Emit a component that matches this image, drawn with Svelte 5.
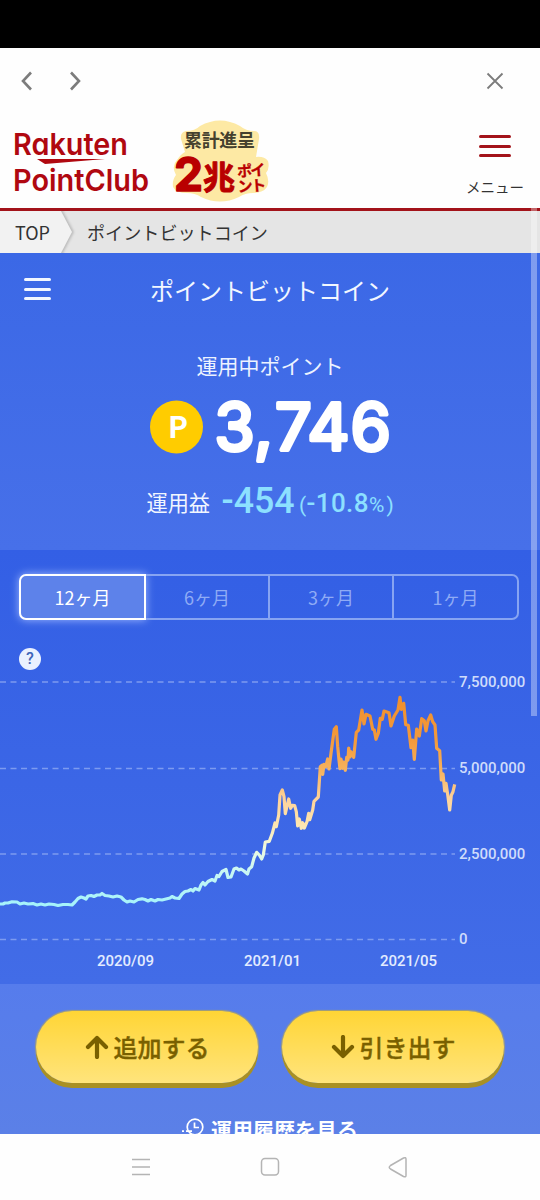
<script lang="ts">
	const periods = ['12ヶ月', '6ヶ月', '3ヶ月', '1ヶ月'];
	let active = $state(0);

	const gridLines = [
		{ y: 682, label: '7,500,000' },
		{ y: 768.5, label: '5,000,000' },
		{ y: 854, label: '2,500,000' },
		{ y: 939.5, label: '0' }
	];

	const months = [
		{ x: 125.5, label: '2020/09' },
		{ x: 272.5, label: '2021/01' },
		{ x: 408.5, label: '2021/05' }
	];

	const price = [
		'0,904 3,904 5,903 8,903 12,901.8 17,902 20,904 24,903 28,904 33,903.6 37,905 41,904 45,905',
		'49,904 54,904.5 58,905.5 63,904.5 68,904.5 72,905 75,902 78,898.5 81,897 84,898 86,899 88,896',
		'91,895.5 94,896.5 97,895 100,895 102,893.5 105,895.5 109,896 113,897 117,896 121,897 124,900',
		'127,902 130,901 134,902 138,899.5 142,898.8 145,899.5 148,901 151,899.5 155,901 158,899.5',
		'162,900 166,899 170,898 172,896.5 175,898 179,898.5 182,894 185,891.5 188,891 191,889.5',
		'193,891 195,888.5 199,890 201,885 203,882.5 205,885 208,881.5 212,879.5 215,881 217,875.5',
		'219,876.5 222,871.5 226,869.5 228,877.5 231,877 234,869 236.5,868 239,870 241,869 244,871 247.5,874',
		'249,869 251.7,866.7 254,858 256.7,852.3 259.3,855 261.7,859 263.3,855 265.3,842 269.3,841.3 272.3,833.3',
		'275,823 276.3,826.7 278.7,815 280,795 282.3,790 284,796.7 285.3,813.7 288.7,799 290.7,808.3',
		'292.3,805.3 294.7,805.7 296.3,811.7 297.7,826 299.3,819 301.3,828.3 302.7,822.7 304.3,828 307,821.7',
		'308.7,813.3 309.7,819.7 312.7,810 314,801.3 318.3,797 320.3,766.7 322,765.3 322.7,774.3 324,764.3',
		'325.7,766.7 327.7,759 329,769 331,753.3 334.3,729.3 336.3,726.7 337.7,746.7 339,760 340,768.7',
		'341,759 342.7,768.3 343.7,762 345.3,770.3 346.7,757.3 348,760 348.7,748 350,757 351,751.7 353.7,757.3',
		'356.3,732.3 358.7,730 362,710 364,724 366,714.3 370,716 372.7,729.3 374.3,730 376,739.3',
		'378.3,733.3 380.3,718.3 382.3,719.3 384,711 389,712.7 391,726 394.3,716 398,710 400,697.3',
		'401.3,709.3 403.7,703.3 405.7,724.7 408.3,725.3 411,747.7 412.7,740 414.3,759.3 416.7,729 419.3,736',
		'421.7,718.7 424.3,720.7 426,731 428,720.7 430.7,715 432.7,721.7 435,725 436.7,748.3 439.7,750.7',
		'441.3,780 443,774 444.7,791 446,783.3 448,796.7 449.7,810 451.3,795.3 453,791.7 454.7,784.3'
	].join(' ');
</script>

<div class="screen">
	<div class="status"></div>

	<div class="browser-bar">
		<svg width="540" height="66" viewBox="0 48 540 66">
			<path d="M31 72.500 23 81l8 8.500M71 72.500l8 8.500-8 8.500" />
			<path class="thin" d="m487.500 73.500 15 15m0-15-15 15" />
		</svg>
	</div>

	<header>
		<svg width="290" height="94" viewBox="0 114 290 94">
			<g class="brand">
				<text x="13" y="155" textLength="115" lengthAdjust="spacingAndGlyphs">Rakuten</text>
				<text x="13" y="190.500" textLength="136" lengthAdjust="spacingAndGlyphs">PointClub</text>
			</g>
			<path fill="#b00810" d="M37 159h68l-60 5Z" />
			<path
				fill="#fde9a4"
				d="M186 131q9 0 14-5 20-11 40 0 6 5 14 5 6 0 5 8l-3 18q8-1 12 4 2 7-2 12 4 8 1 14-4 6-14 6-8 0-14 4-19 9-38 0-6-4-14-4-11 0-14-6-1-7 3-12-5-9 1-15 4-6 8-8l-4-13q-1-7 5-8Z"
			/>
			<text class="badge-top" x="184" y="146.500" textLength="71">累計進呈</text>
			<text class="badge-two" x="174" y="190.500" textLength="29" lengthAdjust="spacingAndGlyphs">2</text>
			<text class="badge-cho" x="203" y="188.500" textLength="32">兆</text>
			<g class="badge-point" transform="rotate(-4 250 178)">
				<text x="237.500" y="176" textLength="28.500">ポイ</text>
				<text x="237" y="191.500" textLength="28.500">ント</text>
			</g>
		</svg>
		<button class="menu">
			<span class="bars"><i></i><i></i><i></i></span>
			<span>メニュー</span>
		</button>
	</header>

	<nav class="crumbs">
		<svg width="80" height="42" viewBox="0 0 80 42">
			<path class="crumb-shadow" d="M0-2H62L74 21 62 44H0Z" />
			<path fill="#f2f2f2" d="M0 0H61L72 21 61 42H0Z" />
			<text x="15" y="28.500" textLength="35">TOP</text>
		</svg>
		<span>ポイントビットコイン</span>
	</nav>

	<section class="summary">
		<div class="title-row">
			<span class="bars"><i></i><i></i><i></i></span>
			<h1>ポイントビットコイン</h1>
		</div>
		<p class="caption">運用中ポイント</p>
		<svg class="points" width="540" height="84" viewBox="0 386 540 84">
			<circle cx="176.500" cy="427" r="26.500" fill="#fc0" />
			<text class="coin" x="168" y="437.500" textLength="20">P</text>
			<text class="amount" x="214.500 254 275 307.500 350.500" y="450">3,746</text>
		</svg>
		<svg class="profit" width="540" height="50" viewBox="0 478 540 50">
			<text class="jp" x="146.500" y="511" textLength="63.500">運用益</text>
			<text class="gain" x="221.500" y="513" textLength="73" lengthAdjust="spacingAndGlyphs">-454</text>
			<text class="rate" y="512"
				><tspan x="299" class="small">(</tspan><tspan x="306.500" textLength="62">-10.8</tspan><tspan
					x="369 386.500"
					class="small">%)</tspan
				></text
			>
		</svg>
	</section>

	<section class="history">
		<div class="tabs">
			{#each periods as period, i}
				<button class:active={active === i} onclick={() => (active = i)}>{period}</button>
			{/each}
		</div>
		<div class="help">?</div>
		<svg class="chart" width="540" height="314" viewBox="0 670 540 314">
			<defs>
				<linearGradient id="heat" gradientUnits="userSpaceOnUse" x1="0" y1="700" x2="0" y2="905">
					<stop offset="0" stop-color="#f0902e" />
					<stop offset="0.2" stop-color="#f39a3c" />
					<stop offset="0.35" stop-color="#f7b45f" />
					<stop offset="0.48" stop-color="#fdd29a" />
					<stop offset="0.6" stop-color="#fee4ad" />
					<stop offset="0.72" stop-color="#eff9de" />
					<stop offset="0.83" stop-color="#caf7f3" />
					<stop offset="1" stop-color="#a5f3fb" />
				</linearGradient>
			</defs>
			{#each gridLines as line}
				<line x1="0" x2="455" y1={line.y} y2={line.y} />
				<text x="459" y={line.y + 4.5}>{line.label}</text>
			{/each}
			{#each months as month}
				<text class="month" x={month.x} y="966">{month.label}</text>
			{/each}
			<polyline points={price} />
		</svg>
	</section>

	<section class="actions">
		<div class="buttons">
			<button>
				<svg width="24" height="24" viewBox="0 0 24 24"><path d="M12 22V3M3 12l9-9 9 9" /></svg>
				追加する
			</button>
			<button>
				<svg width="24" height="24" viewBox="0 0 24 24"><path d="M12 2v19M3 12l9 9 9-9" /></svg>
				引き出す
			</button>
		</div>
		<div class="log">
			<svg width="24" height="20" viewBox="0 0 24 20">
				<circle cx="13" cy="10" r="7.800" />
				<path d="M12.500 5.500v5H17" />
				<path class="tail" d="M0 14.200h2M4 14.200h6" />
			</svg>
			<span>運用履歴を見る</span>
		</div>
	</section>

	<footer>
		<svg width="540" height="66" viewBox="0 1134 540 66">
			<path d="M132 1159.500h18M132 1167h18M132 1174.500h18" />
			<rect x="261.500" y="1158.500" width="17" height="16.500" rx="3.500" />
			<path d="m390.500 1165.500 13-7.500q2.500-1 2.500 1v16.500q0 2-2.500 1l-13-7.500q-2.500-1.700 0-3.500Z" />
		</svg>
	</footer>
	<div class="scrollbar"></div>
</div>

<style>
	:global(body) {
		background: #fff;
	}
	.screen {
		position: relative;
		width: 540px;
		height: 1200px;
		overflow: hidden;
		background: #fefefe;
		font-family: 'Noto Sans CJK JP', sans-serif;
	}
	svg {
		display: block;
		flex: none;
	}
	button {
		margin: 0;
		padding: 0;
		border: 0;
		background: none;
		font-family: inherit;
	}
	.status {
		height: 48px;
		background: #000;
	}
	.browser-bar {
		height: 66px;
	}
	.browser-bar path {
		fill: none;
		stroke: #7c7c7c;
		stroke-width: 2.6;
	}
	.browser-bar .thin {
		stroke-width: 1.8;
	}
	header {
		display: flex;
		justify-content: space-between;
		height: 94px;
		border-bottom: 3px solid #a3131a;
	}
	.brand text {
		fill: #b00810;
		font: 600 30.5px Inter, sans-serif;
		font-feature-settings: 'cv11', 'ss03';
	}
	.badge-top {
		fill: #45412e;
		font-size: 18px;
		font-weight: 700;
	}
	.badge-two,
	.badge-cho,
	.badge-point {
		fill: #b90000;
		stroke: #b90000;
		stroke-linejoin: round;
		font-weight: 700;
	}
	.badge-two {
		font-family: Inter, sans-serif;
		font-size: 47px;
		stroke-width: 1.5;
	}
	.badge-cho {
		font-size: 32px;
		stroke-width: 1;
	}
	.badge-point {
		font-size: 15px;
		stroke-width: 0.3;
	}
	.menu {
		display: flex;
		flex-direction: column;
		align-items: center;
		width: 60px;
		margin: 21px 15px 0 0;
		color: #333;
		font-size: 14.5px;
		line-height: 20px;
		white-space: nowrap;
	}
	.bars {
		display: flex;
		flex-direction: column;
		gap: 6.5px;
	}
	.bars i {
		height: 3px;
		border-radius: 2px;
		background: currentColor;
	}
	.menu .bars {
		width: 32px;
		margin-bottom: 20px;
		color: #a3131a;
	}
	.crumbs {
		display: flex;
		align-items: center;
		gap: 7px;
		height: 42px;
		background: #e5e5e5;
		color: #333;
		font-size: 18.1px;
	}
	.crumbs text {
		fill: #333;
		font-size: 18px;
	}
	.crumb-shadow {
		fill: #bdbdbd;
		filter: blur(1.2px);
	}
	.summary {
		height: 297px;
		background: linear-gradient(#3b68e6, #4770e9);
		color: #fff;
	}
	.title-row {
		display: grid;
		grid-template-columns: 27px 1fr 27px;
		align-items: center;
		height: 74px;
		padding: 0 24px;
		color: #f2f7ff;
	}
	.title-row .bars {
		margin-top: -2px;
	}
	h1 {
		margin: 0;
		text-align: center;
		font-size: 24px;
		font-weight: 400;
		line-height: 74px;
	}
	.caption {
		height: 30px;
		margin: 23px 0 6px;
		color: #edf3ff;
		text-align: center;
		font-size: 21px;
		line-height: 30px;
	}
	.coin {
		fill: #fff;
		font: 700 30px 'Noto Sans CJK JP', sans-serif;
	}
	.amount {
		fill: #fff;
		stroke: #fff;
		stroke-width: 4;
		stroke-linejoin: round;
		font: 400 65px Inter, sans-serif;
	}
	.profit {
		margin-top: 8px;
	}
	.jp {
		fill: #f1f6ff;
		font-size: 21.2px;
	}
	.gain {
		fill: #8ce0ff;
		font: 500 37px Roboto, sans-serif;
	}
	.rate {
		fill: #8ce0ff;
		font: 500 26px Roboto, sans-serif;
	}
	.small {
		font-size: 21px;
		font-weight: 400;
	}
	.history {
		height: 434px;
		background: linear-gradient(#335fe5, #426ce7);
	}
	.tabs {
		display: grid;
		grid-template-columns: 127px 124px 124px 125px;
		padding: 24px 21px 0 19px;
	}
	.tabs button {
		box-sizing: border-box;
		height: 46px;
		border: 1.5px solid #87a4f2;
		border-width: 2px 2px 2px 0;
		color: #8fabf5;
		font-size: 18px;
		line-height: 42px;
	}
	.tabs button:first-child {
		border-radius: 7px 0 0 7px;
	}
	.tabs button:last-child {
		border-radius: 0 7px 7px 0;
	}
	.tabs .active {
		border: 2px solid #fff;
		background: #5d82ea;
		box-shadow: 0 0 9px #9fb9ff;
		color: #fff;
	}
	.help {
		width: 22px;
		height: 22px;
		margin: 28px 0 0 19px;
		border-radius: 50%;
		background: #eaf1ff;
		color: #3f65b8;
		font: 500 16px/22px Roboto, sans-serif;
		text-align: center;
	}
	.chart line {
		stroke: #7d9bf0;
		stroke-width: 1.5;
		stroke-dasharray: 6 4.5;
	}
	.chart text {
		fill: #cfdcfb;
		font: 500 15px Roboto, sans-serif;
	}
	.chart .month {
		fill: #e3ecff;
		text-anchor: middle;
	}
	.chart polyline {
		fill: none;
		stroke: url(#heat);
		stroke-width: 3.2;
		stroke-linejoin: round;
	}
	.actions {
		box-sizing: border-box;
		height: 150px;
		padding: 27px 36px 0;
		overflow: hidden;
		background: linear-gradient(#567cec, #5b80e7);
	}
	.buttons {
		display: flex;
		gap: 24px;
	}
	.buttons button {
		display: flex;
		flex: 1;
		align-items: center;
		justify-content: center;
		gap: 5px;
		height: 72px;
		border-radius: 36px;
		background: linear-gradient(#ffd535, #ffe47c);
		box-shadow:
			0 5px 0 #a99024,
			0 0 1px 1px #a7a070;
		color: #796000;
		font-size: 24px;
		font-weight: 500;
		line-height: 72px;
		-webkit-text-stroke: 0.4px #796000;
	}
	.buttons path {
		fill: none;
		stroke: #796000;
		stroke-width: 4.2;
		stroke-linecap: round;
		stroke-linejoin: round;
	}
	.log {
		display: flex;
		justify-content: center;
		gap: 5px;
		margin-top: 33px;
		color: #fff;
		font-size: 21px;
		font-weight: 700;
		line-height: 26px;
		white-space: nowrap;
	}
	.log svg {
		margin-top: 1px;
		fill: none;
		stroke: #fff;
		stroke-width: 1.7;
	}
	footer {
		height: 66px;
		background: #fefefe;
	}
	footer svg {
		fill: none;
		stroke: #b4b4b4;
		stroke-width: 1.5;
	}
	.scrollbar {
		position: absolute;
		top: 208px;
		right: 3px;
		width: 6px;
		height: 508px;
		background: rgba(255, 255, 255, 0.35);
	}
</style>
